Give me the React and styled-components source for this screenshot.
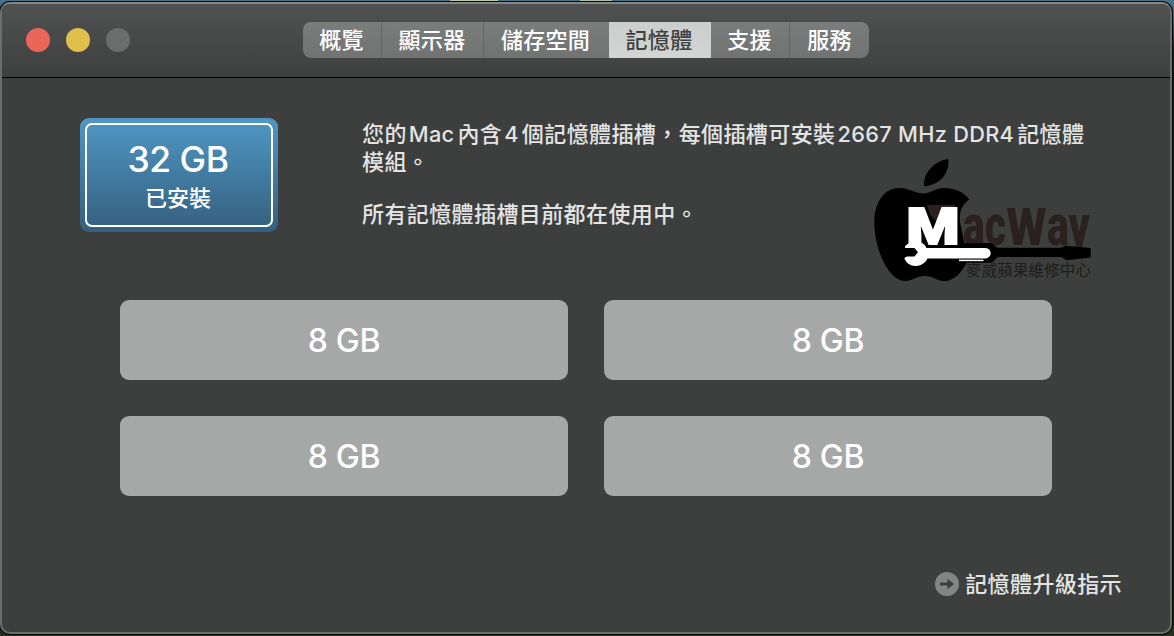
import React from "react";
import styled, { createGlobalStyle } from "styled-components";

const tabs = [
  { label: "概覽", width: 79 },
  { label: "顯示器", width: 102 },
  { label: "儲存空間", width: 125 },
  { label: "記憶體", width: 102, active: true },
  { label: "支援", width: 79 },
  { label: "服務", width: 79 },
];

const slots = ["8 GB", "8 GB", "8 GB", "8 GB"];

const App = () => {
  return (
    <Desktop>
      <GlobalStyle />
      <Window>
        <TitleBar>
          <Lights>
            <Light $color="#ec6559" />
            <Light $color="#e0bf4b" />
            <Light $color="#6b6d6c" />
          </Lights>
          <Tabs>
            {tabs.map((tab) => (
              <Tab key={tab.label} $width={tab.width} $active={tab.active}>
                {tab.label}
              </Tab>
            ))}
          </Tabs>
        </TitleBar>
        <Content>
          <Summary>
            <Installed>
              <InstalledFrame>
                <Total>32 GB</Total>
                <Caption>已安裝</Caption>
              </InstalledFrame>
            </Installed>
            <Description>
              <Paragraph>
                您的<Latin>Mac</Latin>內含<Latin>4</Latin>個記憶體插槽，每個插槽可安裝
                <Latin>2667 MHz DDR4</Latin>記憶體
                <br />
                模組。
              </Paragraph>
              <Paragraph>所有記憶體插槽目前都在使用中。</Paragraph>
            </Description>
            <Watermark />
          </Summary>
          <Slots>
            {slots.map((size, i) => (
              <Slot key={i}>{size}</Slot>
            ))}
          </Slots>
          <Footer>
            <ArrowIcon />
            <FooterLink>記憶體升級指示</FooterLink>
          </Footer>
        </Content>
      </Window>
    </Desktop>
  );
};

export default App;

const ArrowIcon = () => (
  <svg width="24" height="24" viewBox="0 0 24 24">
    <circle cx="12" cy="12" r="12" fill="#848685" />
    <path d="M5 10.500H12.500V6.800L19 12L12.500 17.200V13.500H5Z" fill="#3d3f3e" />
  </svg>
);

const Watermark = () => (
  <WatermarkSvg width="230" height="130" viewBox="866 156 230 130">
    <path
      d="M948.300 159C950 173 940 185 924 186.300C923 173 934 161 948.300 159Z"
      fill="#000"
    />
    <path
      d="M969.300 199.500C964 192 955 188 944 188C936 188 930 193.500 923 193.500C916 193.500 909 188 899 188C884 188 874.300 203 874.300 222C874.300 250 889 281 905 281C912 281 917 276 925 276C933 276 937 281 944 281C954 281 962 273 968 260L960 222C959 211 962 205 969.300 199.500Z"
      fill="#000"
    />
    <path d="M927 205H955V209L940 225L930 215Z" fill="#2b2020" />
    <LogoText x="963" y="244.700" fontSize="57" fill="#2b2020" textLength="43" lengthAdjust="spacingAndGlyphs">
      ac
    </LogoText>
    <LogoText x="1006.500" y="244.700" fontSize="51" fill="#2b2020" textLength="40" lengthAdjust="spacingAndGlyphs">
      W
    </LogoText>
    <LogoText x="1047" y="244.700" fontSize="57" fill="#2b2020" textLength="43" lengthAdjust="spacingAndGlyphs">
      ay
    </LogoText>
    <path
      d="M956 243H990C994 243 994.500 247.500 998.500 247.700H1061.500L1065 245.700L1090.700 248V257.500L1066.500 260.300L1061.500 257H999C995 257.500 994.500 262.700 990 262.700H956Z"
      fill="#000"
    />
    <LogoText x="906.500" y="243.700" fontSize="50" fill="#fff" stroke="#fff" strokeWidth="2" textLength="53" lengthAdjust="spacingAndGlyphs">
      M
    </LogoText>
    <path
      d="M907 244.500C913 240 923 240 926.500 248H985.500A5.200 5.200 0 0 1 985.500 258.400H927.500C923 268 908 269 904.300 258L907 256.500H914.500L918 252.200L914.500 248H905Q904.500 246 907 244.500Z"
      fill="#fff"
    />
    <path d="M959 260.400H983.500" stroke="#fff" strokeWidth="1.500" />
    <TaglineText x="966" y="276" fontSize="15.500" textLength="125">
      麥威蘋果維修中心
    </TaglineText>
  </WatermarkSvg>
);

const GlobalStyle = createGlobalStyle`
  * {
    box-sizing: border-box;
  }

  body {
    margin: 0;
    overflow: hidden;
    font-family: "Inter", "Noto Sans CJK TC", sans-serif;
    -webkit-font-smoothing: antialiased;
  }
`;

/* the wallpaper only shows as a thin strip around the window */
const Desktop = styled.div`
  height: 636px;
  padding: 2px 2px 2px 0;
  background:
    linear-gradient(to right, transparent 450px, #b5c5ae 450px, #b5c5ae 498px, transparent 498px, transparent 580px, #a9bda9 580px, #a9bda9 612px, transparent 612px) 0 0 / 100% 1px no-repeat,
    linear-gradient(to bottom, #47738c 0, #3f667d 20px, #151812 50px, #151812 600px, #29301f 636px);
`;

const Window = styled.div`
  display: flex;
  flex-direction: column;
  height: 632px;
  border: 2px solid #6c6e6d;
  border-top-color: #858780;
  border-radius: 10px;
  background: #3d3f3e;
  box-shadow: 0 0 0 1px #080a0a;
  overflow: hidden;
`;

const TitleBar = styled.header`
  display: flex;
  height: 74px;
  flex-shrink: 0;
  padding: 18px 24px 0;
  border-bottom: 1px solid #000;
  background: linear-gradient(#505251, #3e403f);
`;

const Lights = styled.div`
  display: flex;
  gap: 16px;
  width: 277px;
  padding-top: 6px;
`;

const Light = styled.span`
  width: 24px;
  height: 24px;
  border-radius: 50%;
  background: ${(props) => props.$color};
`;

const Tabs = styled.nav`
  display: flex;
  height: 36px;
  border-radius: 8px;
  overflow: hidden;
`;

const Tab = styled.div`
  width: ${(props) => props.$width}px;
  padding-right: 1px;
  border-right: 1px solid ${(props) => (props.$active ? "#d0d2d1" : "#626463")};
  background: ${(props) =>
    props.$active
      ? "linear-gradient(#cccecd, #d3d5d4)"
      : "linear-gradient(#7b7d7c, #717372)"};
  color: ${(props) => (props.$active ? "#3f4140" : "#fff")};
  font-size: 22px;
  font-weight: 500;
  letter-spacing: 0.3px;
  line-height: 36px;
  text-align: center;
  white-space: nowrap;

  &:nth-child(3) {
    padding-right: 2px;
    border-right: none;
  }

  &:last-child {
    padding-right: 0;
    border-right: none;
  }
`;

const Content = styled.main`
  display: flex;
  flex: 1;
  flex-direction: column;
  padding: 40px 48px 0 78px;
`;

const Summary = styled.section`
  position: relative;
  display: flex;
  gap: 84px;
  height: 182px;
`;

const Installed = styled.div`
  width: 198px;
  height: 114px;
  padding: 5px;
  border-radius: 9px;
  background: linear-gradient(#4f97c5, #355f7d);
`;

const InstalledFrame = styled.div`
  display: flex;
  flex-direction: column;
  align-items: center;
  height: 100%;
  padding: 12px 2px 0 0;
  border: 2px solid #fff;
  border-radius: 7px;
  color: #fff;
`;

const Total = styled.div`
  font-size: 35.5px;
  font-weight: 500;
  letter-spacing: -0.5px;
  line-height: 46px;
`;

const Caption = styled.div`
  font-size: 22px;
  font-weight: 500;
  line-height: 30px;
`;

const Description = styled.div`
  padding-top: 2px;
  color: #e3e4e3;
  font-size: 22px;
  font-weight: 500;
  letter-spacing: 0.4px;
  line-height: 28px;
  white-space: nowrap;
`;

const Paragraph = styled.p`
  margin: 0 0 24px;
`;

const Latin = styled.span`
  margin: 0 3px 0 2px;
  font-size: 21.75px;
  letter-spacing: 0.3px;
`;

const WatermarkSvg = styled.svg`
  position: absolute;
  top: 38px;
  left: 786px;
  overflow: visible;
`;

const LogoText = styled.text`
  font-family: "Roboto", "Liberation Sans", sans-serif;
  font-weight: 900;
`;

const TaglineText = styled.text`
  fill: #221b1a;
  font-family: "Noto Sans CJK TC", sans-serif;
`;

const Slots = styled.section`
  display: grid;
  grid-template-columns: 448px 448px;
  gap: 36px;
  padding-left: 40px;
`;

const Slot = styled.div`
  height: 80px;
  border-radius: 9px;
  background: #a6a8a7;
  color: #fff;
  font-size: 32px;
  font-weight: 500;
  letter-spacing: -0.3px;
  line-height: 82px;
  text-align: center;
`;

const Footer = styled.footer`
  display: flex;
  align-items: center;
  justify-content: flex-end;
  gap: 6px;
  margin-top: 72px;
`;

const FooterLink = styled.span`
  color: #e3e4e3;
  font-size: 22px;
  font-weight: 500;
  letter-spacing: 0.4px;
  line-height: 32px;
`;
